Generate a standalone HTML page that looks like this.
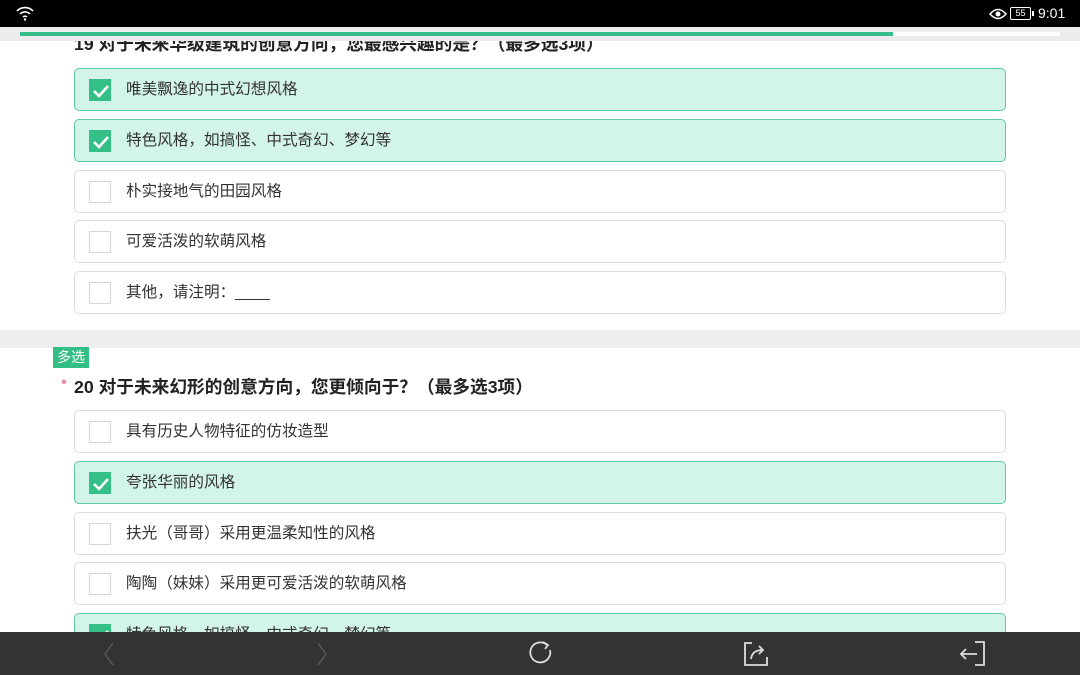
<!DOCTYPE html>
<html><head><meta charset="utf-8"><style>
*{margin:0;padding:0;box-sizing:border-box}
body{width:1080px;height:675px;overflow:hidden;position:relative;background:#fff;font-family:"Liberation Sans","Noto Sans CJK SC",sans-serif;color:#333}
.abs{position:absolute}
.opt{position:absolute;left:74px;width:932px;height:43px;border:1px solid #dcdcdc;border-radius:5px;background:#fff}
.opt.on{background:#d3f4e8;border-color:#5fc9a0}
.cb{position:absolute;left:14px;top:10px;width:22px;height:22px;border:1px solid #d6d6d6;background:#fff}
.on .cb{background:#33bf86;border-color:#33bf86}
.opt span{position:absolute;left:51px;top:11px;font-size:15.6px;line-height:20px;color:#333}
.title{position:absolute;left:74px;font-size:17.7px;font-weight:bold;color:#222;white-space:nowrap}
</style></head><body>
<div class="title" style="top:30px">19 对于未来华级建筑的创意方向，您最感兴趣的是？（最多选3项）</div>
<div class="opt on" style="top:68px"><div class="cb"><svg width="22" height="22"><path d="M4 11l5 5 9-10" stroke="#fff" stroke-width="2.6" fill="none"/></svg></div><span>唯美飘逸的中式幻想风格</span></div>
<div class="opt on" style="top:119px"><div class="cb"><svg width="22" height="22"><path d="M4 11l5 5 9-10" stroke="#fff" stroke-width="2.6" fill="none"/></svg></div><span>特色风格，如搞怪、中式奇幻、梦幻等</span></div>
<div class="opt" style="top:170px"><div class="cb"></div><span>朴实接地气的田园风格</span></div>
<div class="opt" style="top:220px"><div class="cb"></div><span>可爱活泼的软萌风格</span></div>
<div class="opt" style="top:271px"><div class="cb"></div><span>其他，请注明：____</span></div>
<div class="abs" style="left:0;top:330px;width:1080px;height:18px;background:#eeeeee"></div>
<div class="abs" style="left:53px;top:347px;width:36px;height:21px;background:#33bf86;color:#fff;font-size:14px;line-height:21px;text-align:center">多选</div>
<div class="abs" style="left:61px;top:376px;color:#e05a6a;font-size:15px">*</div>
<div class="title" style="top:373px">20 对于未来幻形的创意方向，您更倾向于？（最多选3项）</div>
<div class="opt" style="top:410px"><div class="cb"></div><span>具有历史人物特征的仿妆造型</span></div>
<div class="opt on" style="top:461px"><div class="cb"><svg width="22" height="22"><path d="M4 11l5 5 9-10" stroke="#fff" stroke-width="2.6" fill="none"/></svg></div><span>夸张华丽的风格</span></div>
<div class="opt" style="top:512px"><div class="cb"></div><span>扶光（哥哥）采用更温柔知性的风格</span></div>
<div class="opt" style="top:562px"><div class="cb"></div><span>陶陶（妹妹）采用更可爱活泼的软萌风格</span></div>
<div class="opt on" style="top:613px"><div class="cb"><svg width="22" height="22"><path d="M4 11l5 5 9-10" stroke="#fff" stroke-width="2.6" fill="none"/></svg></div><span>特色风格，如搞怪、中式奇幻、梦幻等</span></div>
<!-- header -->
<div class="abs" style="left:0;top:0;width:1080px;height:27px;background:#000"></div>
<svg class="abs" style="left:16px;top:5px" width="18" height="16"><path d="M1 6a11 11 0 0 1 16 0M4 9a7 7 0 0 1 10 0M7 12a3 3 0 0 1 4 0" stroke="#fff" stroke-width="1.6" fill="none"/><circle cx="9" cy="14.5" r="1.2" fill="#fff"/></svg>
<svg class="abs" style="left:989px;top:7px" width="18" height="14"><path d="M1 7q8-9 16 0q-8 9-16 0z" stroke="#fff" stroke-width="1.5" fill="none"/><circle cx="9" cy="7" r="2.5" fill="#fff"/></svg>
<div class="abs" style="left:1010px;top:7px;width:21px;height:13px;border:1px solid #fff;border-radius:2px;color:#fff;font-size:9px;line-height:11px;text-align:center">55</div>
<div class="abs" style="left:1032px;top:11px;width:2px;height:5px;background:#fff"></div>
<div class="abs" style="left:1038px;top:5px;color:#fff;font-size:14px">9:01</div>
<div class="abs" style="left:0;top:27px;width:1080px;height:14px;background:#ececec"></div>
<div class="abs" style="left:20px;top:32px;width:1040px;height:4px;background:#fff"></div>
<div class="abs" style="left:20px;top:32px;width:873px;height:4px;background:#36be8a"></div>
<!-- bottom bar -->
<div class="abs" style="left:0;top:632px;width:1080px;height:43px;background:#333"></div>
<svg class="abs" style="left:0;top:632px" width="1080" height="43">
<path d="M113 11l-8 11 8 11" stroke="#555" stroke-width="1.5" fill="none"/>
<path d="M318 11l8 11-8 11" stroke="#555" stroke-width="1.5" fill="none"/>
<path d="M547 13a10 10 0 1 0 3 5" stroke="#ddd" stroke-width="1.8" fill="none"/><path d="M543 10l5 3-3 4" stroke="#ddd" stroke-width="1.8" fill="none"/>
<path d="M752 11h-7v22h22v-8" stroke="#ddd" stroke-width="1.8" fill="none"/><path d="M751 27q1-9 12-9M759 14l4 4-4 4" stroke="#ddd" stroke-width="1.8" fill="none"/>
<path d="M975 10h9v23h-9" stroke="#ddd" stroke-width="1.8" fill="none"/><path d="M977 22h-16M966 17l-5 5 5 5" stroke="#ddd" stroke-width="1.8" fill="none"/>
</svg>
</body></html>
